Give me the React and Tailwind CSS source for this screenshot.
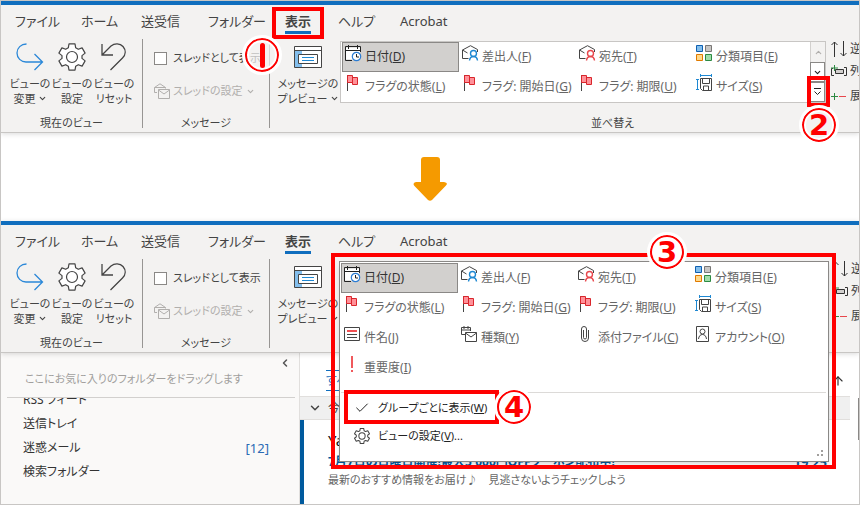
import React from 'react'
import { Check, ChevronDown, ChevronLeft, ChevronUp, ArrowUp } from 'lucide-react'

const tabs = [
  { label: 'ファイル', width: 'w-[66px]' },
  { label: 'ホーム', width: 'w-[60px]' },
  { label: '送受信', width: 'w-[67px]' },
  { label: 'フォルダー', width: 'w-[77px]' },
  { label: '表示', width: 'w-[53px]', active: true },
  { label: 'ヘルプ', width: 'w-[62px]' },
  { label: 'Acrobat', width: 'w-[60px]' },
]

const sortItems = [
  { label: '日付', accessKey: 'D', icon: 'date', selected: true },
  { label: '差出人', accessKey: 'F', icon: 'from' },
  { label: '宛先', accessKey: 'T', icon: 'to' },
  { label: '分類項目', accessKey: 'E', icon: 'category' },
  { label: 'フラグの状態', accessKey: 'L', icon: 'flag' },
  { label: 'フラグ: 開始日', accessKey: 'G', icon: 'flag' },
  { label: 'フラグ: 期限', accessKey: 'U', icon: 'flag' },
  { label: 'サイズ', accessKey: 'S', icon: 'size' },
  { label: '件名', accessKey: 'J', icon: 'subject' },
  { label: '種類', accessKey: 'Y', icon: 'type' },
  { label: '添付ファイル', accessKey: 'C', icon: 'attachment' },
  { label: 'アカウント', accessKey: 'O', icon: 'account' },
  { label: '重要度', accessKey: 'I', icon: 'importance' },
]

const folders = [
  { name: 'RSS フィード' },
  { name: '送信トレイ' },
  { name: '迷惑メール', count: 12 },
  { name: '検索フォルダー' },
]

const EnvelopePerson = ({ color }) => (
  <>
    <path d="M6.5 13.5H.5V5L8.500.7 15.500 4.500V7M.5 5l5 3" stroke="#444" />
    <circle cx="11.500" cy="8.500" r="3" stroke={color} strokeWidth="1.400" />
    <path d="M7.500 15.500c.3-2.600 1.800-4 4-4s3.700 1.400 4 4" stroke={color} strokeWidth="1.400" />
  </>
)

const iconShapes = {
  date: (
    <>
      <path d="M1 2.500h14v12H1z" fill="#fff" />
      <path d="M7 15.500H.5v-14h15V7M.5 5.500h15M3.500 0v4M12.500 0v4" stroke="#222" />
      <circle cx="11.500" cy="11.500" r="4.200" fill="#fff" stroke="#2b7cd3" strokeWidth="1.200" />
      <path d="M11.500 9v3h2.500" stroke="#222" />
    </>
  ),
  from: <EnvelopePerson color="#1e88d2" />,
  to: <EnvelopePerson color="#e8474c" />,
  category: (
    <>
      <path d="M.5.5h6v6h-6z" fill="#83beec" stroke="#0f5fb0" />
      <path d="M9.500.5h6v6h-6z" fill="#c8c6c4" stroke="#797775" />
      <path d="M.5 9.500h6v6h-6z" fill="#ffd98c" stroke="#e07a00" />
      <path d="M9.500 9.500h6v6h-6z" fill="#a1ddaa" stroke="#2d8a43" />
    </>
  ),
  flag: (
    <>
      <path d="M2.500 0v16" stroke="#444" />
      <path d="M7.500 2.500h5v7h-5z" fill="#ff9199" stroke="#d9262c" />
      <path d="M2.500.5h5v7h-5z" fill="#ff9199" stroke="#d9262c" />
    </>
  ),
  size: (
    <>
      <path d="M4.500.5h11M4.500-1v3M15.500-1v3M1.500 4v11M0 4.500h3M0 14.500h3" stroke="#1e88d2" />
      <path d="M4.500 3.500h11v12h-9l-2-2z" stroke="#444" />
      <path d="M6.500 4v4.500h7V4M7.500 15v-4h5v4" stroke="#444" />
    </>
  ),
  subject: (
    <>
      <path d="M.5 1.500h15v13H.5z" stroke="#444" fill="#fff" />
      <path d="M3 5h10" stroke="#f04f52" strokeWidth="2" />
      <path d="M3 8.500h10M3 11.500h10" stroke="#444" />
    </>
  ),
  type: (
    <>
      <path d="M4 8.500H.5v-7h9V5M.5 4h9M3 0v3M7 0v3" stroke="#444" />
      <path d="M4.500 6.500h11v9h-11zM4.500 7l5.500 4 5.500-4" stroke="#444" fill="#fff" />
    </>
  ),
  attachment: (
    <path d="M5.500 4v7.500a1.500 1.500 0 0 0 3 0V3a2.500 2.500 0 0 0-5 0v9a3.500 3.500 0 0 0 7 0V4" stroke="#444" />
  ),
  account: (
    <>
      <path d="M1.500.5h12v15h-12z" stroke="#444" />
      <circle cx="7.500" cy="5.500" r="2.500" stroke="#444" />
      <path d="M3.500 13c.4-3 1.800-4.500 4-4.500s3.600 1.500 4 4.500" stroke="#444" />
    </>
  ),
  importance: <path d="M7 0h2v12H7zM7 14h2v2H7z" fill="#f0595c" />,
}

const SortIcon = ({ name }) => (
  <svg viewBox="0 0 16 16" className="w-4 h-4 flex-shrink-0 overflow-visible" fill="none" aria-hidden="true">
    {iconShapes[name]}
  </svg>
)

const GearIcon = ({ className, strokeWidth }) => (
  <svg viewBox="0 0 28 28" className={className} fill="#fff" stroke="#444" strokeWidth={strokeWidth} strokeLinejoin="round" aria-hidden="true">
    <path d="M11 .8h6l.7 4 2.600 1.500 3.800-1.400 3 5.200-3.100 2.500v2.800l3.100 2.500-3 5.200-3.800-1.400-2.600 1.500-.7 4h-6l-.7-4-2.600-1.500-3.800 1.400-3-5.200L4 15.400v-2.800L.9 10.100l3-5.200 3.800 1.400 2.600-1.500z" />
    <circle cx="14" cy="14" r="5.500" />
  </svg>
)

const NumberBadge = ({ number, className }) => (
  <span
    className={`absolute z-30 flex items-center justify-center w-[34px] h-[34px] rounded-full border-2 border-[#f00] outline-3 outline-white inset-shadow-[0_0_0_2px_#fff] font-['DejaVu_Sans',sans-serif] text-[29px] leading-none font-bold text-[#f00] ${className}`}
  >
    {number === 1 ? <span aria-label="1" className="w-[5px] h-[25px] rounded-sm bg-[#f00]" /> : number}
  </span>
)

const Highlight = ({ className }) => (
  <span className={`absolute z-20 border-4 border-[#f00] pointer-events-none ${className}`} />
)

const SortGrid = ({ items }) => (
  <div className="grid grid-cols-[repeat(4,117px)] auto-rows-[30px] text-[12px]">
    {items.map((item) => (
      <button
        key={item.label}
        className={`flex items-start gap-1 pl-[3px] pt-[3px] text-left whitespace-nowrap ${
          item.selected ? 'bg-[#d2d0ce] outline outline-[#8a8886] -outline-offset-1 text-[#333]' : 'text-[#666]'
        }`}
      >
        <SortIcon name={item.icon} />
        <span className="pt-1 leading-4">
          {item.label}(<u>{item.accessKey}</u>)
        </span>
      </button>
    ))}
  </div>
)

const SortGallery = () => (
  <div className="relative flex mt-0.5 h-[62px] border border-[#c8c6c4] bg-white pl-px">
    <SortGrid items={sortItems.slice(0, 8)} />
    <div className="flex flex-col w-[15px]">
      <button aria-label="上へ" className="flex h-5 items-center justify-center border-l border-[#d2d0ce] bg-[#f3f2f1] text-[#b0aeac]">
        <ChevronUp size={9} strokeWidth={3} />
      </button>
      <button aria-label="下へ" className="flex h-5 items-center justify-center border border-[#8a8886] text-[#222]">
        <ChevronDown size={9} strokeWidth={3} />
      </button>
      <button aria-label="その他" className="flex h-5 items-center justify-center border border-[#8a8886] text-[#222]">
        <svg viewBox="0 0 9 8" className="w-[9px] h-2" fill="none" stroke="currentColor" aria-hidden="true">
          <path d="M1 .5h7M1.500 3.500l3 3 3-3" />
        </svg>
      </button>
    </div>
    <Highlight className="left-[466px] top-[34px] w-[23px] h-[31px]" />
    <NumberBadge number={2} className="left-[461px] top-[66px] bg-[#f3f2f1]" />
  </div>
)

const SortMenu = () => (
  <div className="relative w-[487px] mt-0.5">
    <div className="absolute -left-px top-0 w-[490px] border border-[#8a8886] bg-white p-px pb-[11px] shadow-md">
      <SortGrid items={sortItems} />
      <div className="mt-[9px] mb-px mr-px border-t border-[#dcdad8]" />
      <button className="relative flex w-full h-7 items-center gap-2 pl-[13px] text-[#222]">
        <Check className="w-4 h-4" strokeWidth={1.5} />
        <span>
          グループごとに表示(<u>W</u>)
        </span>
        <Highlight className="left-[3px] -top-1 w-[155px] h-[34px]" />
        <NumberBadge number={4} className="left-[156px] -top-1 bg-white" />
      </button>
      <button className="flex w-full h-7 items-center gap-2 pl-[13px] text-[#222]">
        <GearIcon className="w-4 h-4" strokeWidth="1.800" />
        <span>
          ビューの設定(<u>V</u>)...
        </span>
      </button>
      <svg viewBox="0 0 8 8" className="absolute right-1 bottom-1 w-2 h-2" fill="#a19f9d" aria-hidden="true">
        <path d="M5 1h2v2H5zM5 5h2v2H5zM1 5h2v2H1z" />
      </svg>
    </div>
    <Highlight className="-left-[9px] -top-2 w-[505px] h-[216px]" />
    <NumberBadge number={3} className="left-[310px] -top-[26px] bg-white" />
  </div>
)

const RibbonButton = ({ icon, lines, dropdown, className }) => (
  <button className={`flex flex-col items-center pt-1 leading-[15px] whitespace-nowrap ${className}`}>
    <span className="flex h-7 items-center">{icon}</span>
    <span className="mt-[5px]">{lines[0]}</span>
    <span className="flex items-center gap-0.5">
      {lines[1]}
      {dropdown && <ChevronDown size={9} strokeWidth={3} />}
    </span>
  </button>
)

const GroupSeparator = () => <div className="w-px h-[89px] flex-shrink-0 bg-[#979593]" />

const Ribbon = ({ menuOpen }) => (
  <header className="relative z-10 border-t-4 border-[#106ebe] bg-[#f3f2f1] text-[#444] shadow-[0_1px_5px_rgba(0,0,0,0.15)]">
    <nav className="flex h-[34px] pl-3.5 text-[13px]">
      {tabs.map((tab) => (
        <button key={tab.label} className={`flex justify-start whitespace-nowrap ${tab.width}`}>
          <span
            className={`relative h-[29px] leading-[32px] ${
              tab.active ? 'font-bold border-b-3 border-[#106ebe]' : ''
            }`}
          >
            {tab.label}
            {tab.active && !menuOpen && <Highlight className="-left-[13px] top-0.5 w-[52px] h-8" />}
          </span>
        </button>
      ))}
    </nav>

    <div className="flex h-[93px]">
      <section className="w-[141px] flex flex-col justify-between flex-shrink-0">
        <div className="flex pl-2">
          <RibbonButton
            className="w-[42px]"
            lines={['ビューの', '変更']}
            dropdown
            icon={
              <svg viewBox="0 0 28 28" className="w-7 h-7" fill="none" stroke="#2b88d8" strokeWidth="1.300" aria-hidden="true">
                <path d="M10.500 1C5 1 1 5 1 10s4 9 9 9h16M18.500 11l8 8-8 8" />
              </svg>
            }
          />
          <RibbonButton
            className="w-[42px]"
            lines={['ビューの', '設定']}
            icon={<GearIcon className="w-7 h-7" strokeWidth="1.200" />}
          />
          <RibbonButton
            className="w-[42px]"
            lines={['ビューの', 'リセット']}
            icon={
              <svg viewBox="0 0 28 28" className="w-7 h-7" fill="none" stroke="#444" strokeWidth="1.300" aria-hidden="true">
                <path d="M2 1v11h11M2 12 11 3c3.500-3 9-3 12 .5s3 8-.5 11.500L10.500 27" />
              </svg>
            }
          />
        </div>
        <h3 className="text-center leading-[18px]">現在のビュー</h3>
      </section>
      <GroupSeparator />

      <section className="relative w-[126px] flex flex-col justify-between flex-shrink-0">
        <div className="flex flex-col gap-[15px] pl-[11px] pt-2.5 whitespace-nowrap">
          <label className="flex items-center gap-1.5 h-[18px]">
            <input type="checkbox" className="appearance-none w-[13px] h-[13px] flex-shrink-0 border border-[#8a8886] bg-white" />
            スレッドとして表示
          </label>
          <button disabled className="flex items-center gap-[3px] h-[18px] text-[#b1afad]">
            <svg viewBox="0 0 16 16" className="w-4 h-4 flex-shrink-0" fill="none" stroke="currentColor" aria-hidden="true">
              <path d="M3 9.500H.5v-5L6 .8l5.500 3.700M.5 4.500h11v1" />
              <path d="M4.500 6.500h11v9h-11zM4.500 7l5.500 4 5.500-4" />
            </svg>
            スレッドの設定
            <ChevronDown size={9} strokeWidth={3} />
          </button>
        </div>
        <h3 className="text-center leading-[18px]">メッセージ</h3>
        {!menuOpen && <NumberBadge number={1} className="left-[102px] -top-px bg-[#f3f2f1]/70" />}
      </section>
      <GroupSeparator />

      <section className="flex-1 min-w-0 flex flex-col justify-between">
        <div className="flex pl-2">
          <RibbonButton
            className="w-[60px] mr-0.5 flex-shrink-0"
            lines={['メッセージの', 'プレビュー']}
            dropdown
            icon={
              <svg viewBox="0 0 28 22" className="w-7 h-[22px]" fill="none" aria-hidden="true">
                <path d="M.5.5h27v21H.5z" fill="#fff" stroke="#444" />
                <path d="M1 5h7v16H1z" fill="#83beec" />
                <path d="M.5 4.500h27M4.500 8.500h19v9h-19z" fill="#fff" stroke="#444" />
                <path d="M8 11.500h12M8 14.500h12" stroke="#1e88d2" />
              </svg>
            }
          />
          {menuOpen ? <SortMenu /> : <SortGallery />}
          <div className="flex-1 min-w-0 overflow-hidden pl-[5px] pt-0.5 text-[12px] whitespace-nowrap">
            <button className="flex h-4 items-center gap-[3px]">
              <svg viewBox="0 0 16 16" className="w-4 h-4 flex-shrink-0" fill="none" stroke="#333" aria-hidden="true">
                <path d="M3.500 16V1M.5 4l3-3 3 3M12.500 0v15M9.500 12l3 3 3-3" />
              </svg>
              逆順
            </button>
            <button className="flex h-7 items-center gap-[3px]">
              <svg viewBox="0 0 16 12" className="w-4 h-3 flex-shrink-0" fill="none" aria-hidden="true">
                <path d="M2 3.500H.5v7H3M13 2.500h2.500v8H13" stroke="#333" />
                <path d="M4.500 4.500h8v4h-8z" fill="#d2d0ce" stroke="#333" />
                <path d="M3.500 0v6M0 3h7" stroke="#2d8a43" />
              </svg>
              列の追加
            </button>
            <button className="flex h-[22px] items-center gap-[3px]">
              <svg viewBox="0 0 16 7" className="w-4 h-[7px] flex-shrink-0" fill="none" aria-hidden="true">
                <path d="M3.500 0v7M0 3.500h7" stroke="#2d8a43" />
                <path d="M8 3.500h7" stroke="#e8474c" />
              </svg>
              展開/折りたたみ
            </button>
          </div>
        </div>
        <h3 className="pl-24 text-center leading-[18px]">並べ替え</h3>
      </section>
    </div>
    <div className="h-px bg-[#c8c6c4]" />
  </header>
)

const FolderPane = () => (
  <aside className="w-[299px] flex-shrink-0 flex flex-col border-r border-[#e1dfdd] bg-[#faf9f8] pl-1.5 pr-1 text-[#333]">
    <div className="flex justify-end h-4 pr-1 items-end">
      <button aria-label="折りたたむ" className="text-[#555]">
        <ChevronLeft size={12} strokeWidth={3} />
      </button>
    </div>
    <p className="h-[29px] pl-[18px] leading-[20px] text-[#a19f9d] border-b border-[#d2d0ce]">
      ここにお気に入りのフォルダーをドラッグします
    </p>
    <ul className="overflow-hidden pl-4 pr-[22px] text-[12px]">
      {folders.map((folder) => (
        <li key={folder.name} className="h-6 leading-6 first:-mt-2.5">
          <a href="#" className="flex justify-between pr-1">
            <span>{folder.name}</span>
            {folder.count && <span className="text-[13px] text-[#2b6cb5]">[{folder.count}]</span>}
          </a>
        </li>
      ))}
    </ul>
  </aside>
)

const MessageList = () => (
  <main className="relative flex-1 min-w-0 bg-white">
    <div className="flex h-[43px] items-center justify-between pl-[26px] pr-3.5 pt-3">
      <button className="border-y border-[#106ebe] text-[12px] text-[#106ebe] leading-[19px]">すべて</button>
      <button aria-label="昇順" className="text-[#333]">
        <ArrowUp size={14} strokeWidth={2} />
      </button>
    </div>
    <button className="flex w-[calc(100%-9px)] h-6 items-center gap-1.5 border-y border-[#e1dfdd] bg-[#f0f0f0] pl-2 text-[12px] text-[#444]">
      <ChevronDown size={14} strokeWidth={2.500} />
      今日
    </button>
    <article className="h-[84px] border-l-4 border-[#005a9e] pl-6 pr-8 whitespace-nowrap overflow-hidden">
      <h4 className="h-8 pt-2 text-[15px] leading-6 text-[#111]">Yahoo!ショッピング</h4>
      <div className="flex justify-between h-5 leading-5 text-[12px] font-bold text-[#005a9e]">
        <span>7月7日の日曜日開催!最大5,000円OFFクーポン配布中!</span>
        <span className="text-[13px]">19:25</span>
      </div>
      <p className="text-[#666]">最新のおすすめ情報をお届け♪　見逃さないようチェックしよう</p>
    </article>
    <span className="absolute right-0 top-[45px] w-px h-[42px] bg-[#8a8886]" />
  </main>
)

const App = () => (
  <div className="min-h-screen overflow-hidden border border-[#c8c6c4] bg-white font-['Noto_Sans','Noto_Sans_CJK_JP',sans-serif] text-[11px] leading-4 [font-feature-settings:'palt']">
    <Ribbon />
    <div className="flex h-[88px] justify-center pt-6">
      <svg viewBox="0 0 34 44" className="w-[34px] h-11" fill="#f59a00" aria-hidden="true">
        <path d="M11 0h13q3 0 3 3v22h4q5 1 1.500 4L19 43q-2 1.500-4 0L1.500 29Q-1 26 3 25h5V3q0-3 3-3z" />
      </svg>
    </div>
    <Ribbon menuOpen />
    <div className="flex">
      <FolderPane />
      <MessageList />
    </div>
  </div>
)

export default App
